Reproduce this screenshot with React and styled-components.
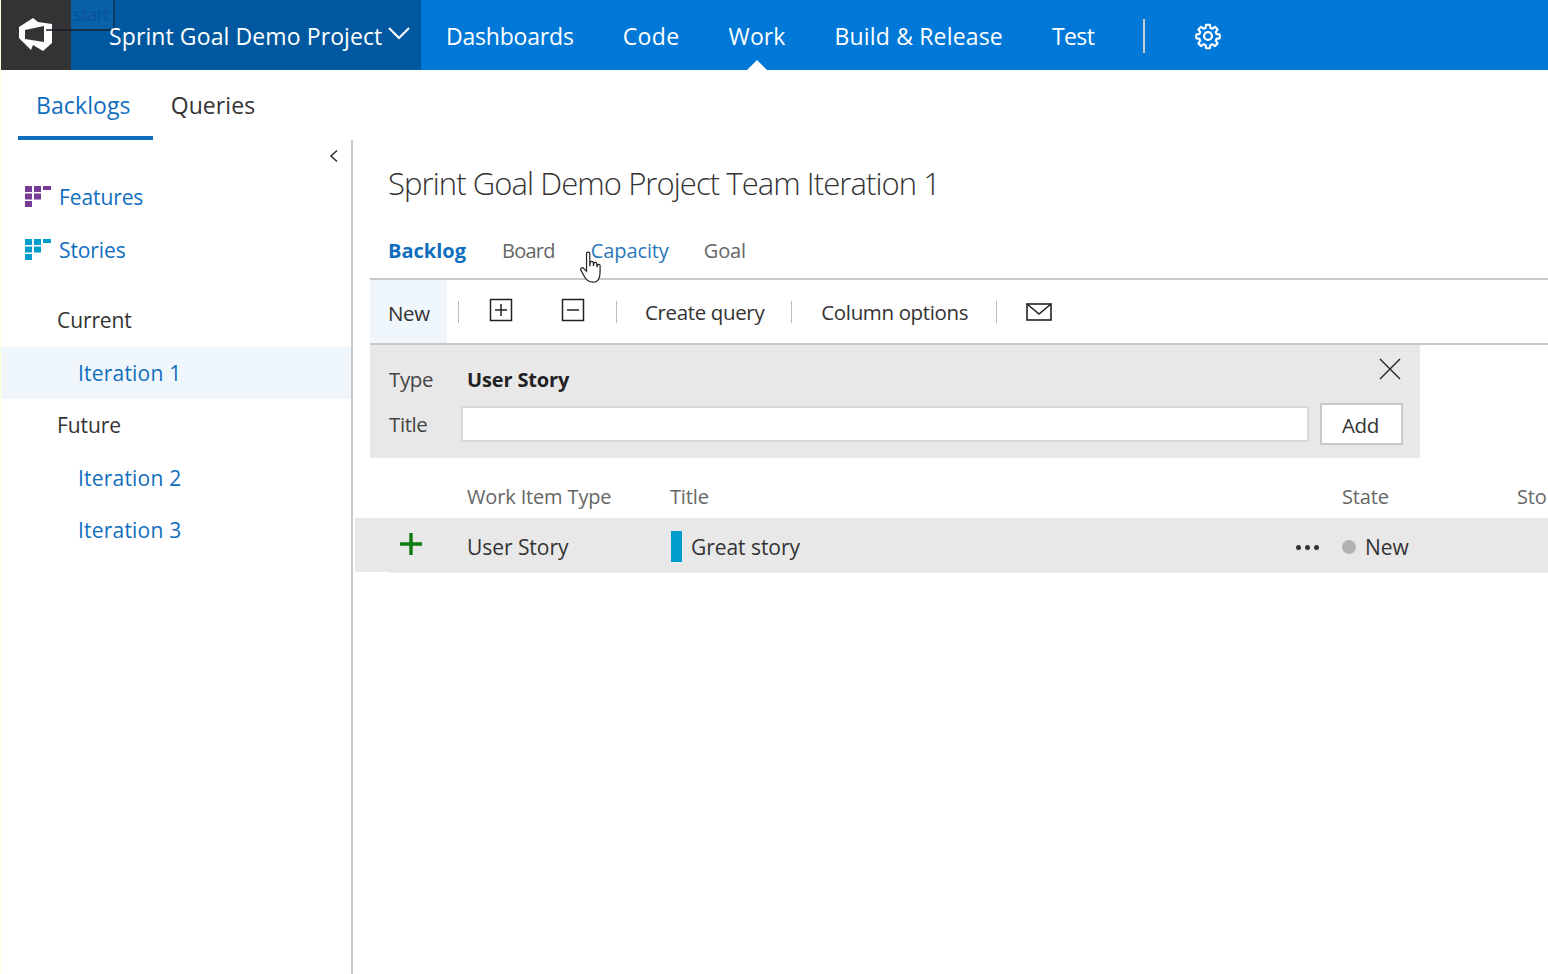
import React from "react";
import styled, { createGlobalStyle } from "styled-components";

const Global = createGlobalStyle`
  * { box-sizing: border-box; }
  html, body { margin: 0; padding: 0; background: #fff; }
  body {
    font-family: "Open Sans", "Noto Sans", "Liberation Sans", sans-serif;
    color: #333;
    overflow: hidden;
  }
`;

const LogoIcon = () => (
  <svg width="34" height="34" viewBox="0 0 34 34">
    <path
      fill="#fff"
      fillRule="evenodd"
      d="M14 0 L19 4 L33 6 L33 25 L24 33 L14 27 L12 32 L5 25 L0 20 L0 9 Z M6 12 L25 8 L25 24 L6 21 Z"
    />
  </svg>
);

const GearIcon = () => (
  <svg width="28" height="28" viewBox="0 0 24 24" fill="none" stroke="#fff" strokeWidth="1.9" strokeLinejoin="round">
    <path d="M10.3 2.2h3.4l.5 2.9 1.7.7 2.4-1.7 2.4 2.4-1.7 2.4.7 1.7 2.9.5v3.4l-2.9.5-.7 1.7 1.7 2.4-2.4 2.4-2.4-1.7-1.7.7-.5 2.9h-3.4l-.5-2.9-1.7-.7-2.4 1.7-2.4-2.4 1.7-2.4-.7-1.7-2.9-.5v-3.4l2.9-.5.7-1.7-1.7-2.4 2.4-2.4 2.4 1.7 1.7-.7z" transform="translate(12 12) scale(.95) translate(-12 -12.4)" />
    <circle cx="12" cy="12" r="3.4" />
  </svg>
);

const BacklogIcon = ({ color }) => (
  <svg width="26" height="21" viewBox="0 0 26 21" fill={color}>
    <rect x="0" y="0" width="7" height="6" />
    <rect x="9" y="0" width="7" height="6" />
    <rect x="18" y="0" width="8" height="4" />
    <rect x="0" y="7.5" width="7" height="6" />
    <rect x="9" y="7.5" width="7" height="6" />
    <rect x="0" y="15" width="7" height="6" />
  </svg>
);

const BoxIcon = ({ plus }) => (
  <svg width="24" height="24" viewBox="0 0 24 24" fill="none" stroke="#222" strokeWidth="1.5">
    <rect x="1.5" y="1.5" width="21" height="21" />
    <path d={plus ? "M12 6v12M6 12h12" : "M6 12h12"} />
  </svg>
);

const MailIcon = () => (
  <svg width="26" height="18" viewBox="0 0 26 18" fill="none" stroke="#222" strokeWidth="1.6">
    <rect x="1" y="1" width="24" height="16" />
    <path d="M1 1l12 10L25 1" />
  </svg>
);

const HandCursor = () => (
  <svg width="26" height="35" viewBox="0 0 22 32" fill="#fff" stroke="#222" strokeWidth="1.1">
    <path d="M6 2.5c0-2 3-2 3 0V14l.4-3.5c.3-1.5 2.8-1.4 2.8.3l.1 3 .4-2.4c.3-1.4 2.600-1.200 2.700.4l.1 3 .5-1.800c.4-1.200 2.400-.9 2.400.6 0 3.500.2 7.500-.6 10.200-.8 3-3 4.700-6 4.700-3.600 0-5.500-1-7.500-4.700L.8 17.500c-.7-1.500 1-2.900 2.300-1.700L6 18.500z" />
  </svg>
);

const Page = styled.div`
  width: 1548px;
  height: 974px;
  display: flex;
  flex-direction: column;
  border-left: 1px solid #ffffd8;
  position: relative;
  overflow: hidden;
`;

const TopBar = styled.header`
  height: 70px;
  flex: none;
  display: flex;
  align-items: stretch;
  background: #0078d7;
  color: #fff;
`;

const LogoBox = styled.div`
  width: 70px;
  background: #333;
  display: flex;
  align-items: center;
  justify-content: center;
`;

const ProjectBox = styled.div`
  width: 350px;
  background: #0059a0;
  display: flex;
  align-items: center;
  padding-left: 38px;
  font-size: 23px;
  letter-spacing: 0.1px;
  gap: 5px;
`;

const ProjectName = styled.span`
  position: relative;
  z-index: 2;
  margin-top: 2px;
`;

const Chevron = styled.svg`
  margin-top: -2px;
`;

const StartGhost = styled.div`
  position: absolute;
  left: 70px;
  top: 0;
  width: 44px;
  height: 31px;
  background: #0862a8;
  border-right: 2px solid #0d3d66;
  color: #0a5299;
  font-size: 19px;
  letter-spacing: -1px;
  line-height: 29px;
  padding-left: 2px;

  &::after {
    content: "";
    position: absolute;
    left: -25px;
    right: -2px;
    bottom: 0;
    height: 2px;
    background: rgba(20, 30, 40, 0.75);
  }
`;

const NavList = styled.nav`
  display: flex;
  align-items: center;
  padding-left: 25px;
`;

const NavItem = styled.div`
  font-size: 23px;
  letter-spacing: ${(p) => p.$spacing}px;
  margin-right: 49px;
  position: relative;
  height: 70px;
  line-height: 72px;

  ${(p) =>
    p.$active &&
    `
    &::after {
      content: "";
      position: absolute;
      left: 50%;
      bottom: 0;
      margin-left: -10px;
      border-left: 10px solid transparent;
      border-right: 10px solid transparent;
      border-bottom: 10px solid #fff;
    }
  `}
`;

const NavDivider = styled.div`
  width: 2px;
  height: 34px;
  background: #ccc;
  margin-right: 49px;
  margin-top: 2px;
`;

const GearWrap = styled.div`
  display: flex;
  margin-top: 2px;
`;

const HubBar = styled.div`
  height: 70px;
  flex: none;
  display: flex;
  padding-left: 17px;
`;

const HubTab = styled.div`
  height: 70px;
  padding: 0 22px 0 18px;
  line-height: 70px;
  font-size: 23px;
  letter-spacing: 0.1px;
  color: ${(p) => (p.$active ? "#106ebe" : "#333")};
  border-bottom: ${(p) => (p.$active ? "4px solid #106ebe" : "none")};
`;

const Body = styled.div`
  flex: 1;
  display: flex;
  min-height: 0;
`;

const Sidebar = styled.aside`
  width: 352px;
  flex: none;
  border-right: 2px solid #c8c8c8;
  padding-top: 4px;
`;

const CollapseRow = styled.div`
  height: 24px;
  display: flex;
  justify-content: flex-end;
  align-items: center;
  padding-right: 11px;
`;

const BacklogLink = styled.div`
  height: 53px;
  display: flex;
  align-items: center;
  gap: 8px;
  padding-left: 24px;
  font-size: 21px;
  letter-spacing: -0.1px;
  color: #106ebe;
`;

const FirstLinks = styled.div`
  padding-top: 2px;
  padding-bottom: 18px;
`;

const GroupLabel = styled.div`
  height: 53px;
  line-height: 53px;
  padding-left: 56px;
  font-size: 21px;
  letter-spacing: -0.1px;
`;

const IterationLink = styled.div`
  height: 52px;
  line-height: 52px;
  padding-left: 77px;
  font-size: 21px;
  letter-spacing: 0.2px;
  color: #106ebe;
  background: ${(p) => (p.$selected ? "#eff6fc" : "transparent")};
`;

const Main = styled.main`
  flex: 1;
  min-width: 0;
  padding-left: 2px;
`;

const Title = styled.h1`
  margin: 0;
  height: 68px;
  padding: 20px 0 0 33px;
  font-size: 31px;
  line-height: 46px;
  font-weight: 300;
  letter-spacing: -0.92px;
  color: #333;
`;

const PivotRow = styled.div`
  height: 70px;
  padding: 22px 0 0 33px;
  display: flex;
  gap: 36px;
`;

const PivotTab = styled.div`
  font-size: 20px;
  line-height: 42px;
  letter-spacing: ${(p) => p.$spacing}px;
  margin-right: ${(p) => p.$right || 0}px;
  font-weight: ${(p) => (p.$active ? 700 : 400)};
  color: ${(p) => (p.$active ? "#106ebe" : p.$blue ? "#2b78b8" : "#666")};
`;

const Toolbar = styled.div`
  margin-left: 15px;
  height: 67px;
  display: flex;
  align-items: center;
  border-top: 2px solid #c8c8c8;
  border-bottom: 2px solid #c8c8c8;
  font-size: 20.5px;
  letter-spacing: -0.36px;
  color: #333;
`;

const NewButton = styled.div`
  width: 77px;
  height: 100%;
  background: #eff6fc;
  line-height: 66px;
  padding-left: 18px;
`;

const ToolDivider = styled.div`
  width: 1px;
  height: 22px;
  background: #bbb;
  margin-left: ${(p) => p.$left}px;
  margin-right: ${(p) => p.$right}px;
`;

const ToolIcon = styled.div`
  display: flex;
  margin-top: ${(p) => p.$top ?? -4}px;
  margin-right: ${(p) => p.$right || 0}px;
`;

const ToolText = styled.div`
  line-height: 1;
  white-space: nowrap;
  margin-top: 2px;
`;

const QuickForm = styled.div`
  margin-left: 15px;
  width: 1050px;
  height: 113px;
  background: #e8e8e8;
  display: grid;
  grid-template-columns: 80px 848px 83px;
  grid-template-rows: 58px 40px;
  column-gap: 11px;
  position: relative;
`;

const FormLabel = styled.div`
  padding-left: 19px;
  font-size: 20.5px;
  letter-spacing: -0.4px;
  display: flex;
  align-items: ${(p) => (p.$top ? "flex-end" : "center")};
  padding-bottom: ${(p) => (p.$top ? "10px" : "0")};
  padding-top: ${(p) => (p.$top ? "0" : "1px")};
  color: #444;
  white-space: nowrap;
`;

const TypeValue = styled.div`
  grid-column: 2 / 4;
  font-size: 20px;
  font-weight: 700;
  letter-spacing: -0.15px;
  color: #222;
  display: flex;
  align-items: flex-end;
  margin-left: 6px;
  padding-bottom: 10px;
`;

const TitleInput = styled.input`
  height: 36px;
  margin: 3px 0 0 0;
  border: 2px solid #d9d9d9;
  background: #fff;
`;

const AddButton = styled.button`
  height: 42px;
  background: #fff;
  border: 2px solid #c8c8c8;
  font: inherit;
  font-size: 20.5px;
  letter-spacing: -0.3px;
  color: #333;
  padding: 2px 2px 0 0;
`;

const CloseButton = styled.div`
  position: absolute;
  right: 19px;
  top: 13px;
  display: flex;
`;

const HeadRow = styled.div`
  margin-left: 112px;
  height: 60px;
  display: grid;
  grid-template-columns: 203px 672px 175px 1fr;
  align-items: center;
  padding-top: 16px;
  font-size: 20px;
  letter-spacing: -0.15px;
  color: #666;
  white-space: nowrap;
  overflow: hidden;
`;

const ItemRow = styled.div`
  height: 54px;
  background: #e8e8e8;
  display: grid;
  grid-template-columns: 112px 203px 625px 47px 1fr;
  align-items: center;
  font-size: 21px;
  letter-spacing: -0.05px;
  line-height: 58px;
  color: #333;
  position: relative;

  &::after {
    content: "";
    position: absolute;
    left: 35px;
    right: 0;
    bottom: -1px;
    height: 1px;
    background: #e8e8e8;
  }
`;

const PlusCell = styled.div`
  display: flex;
  justify-content: flex-end;
  padding-right: 44px;
  margin-top: -6px;
`;

const TitleCell = styled.div`
  display: flex;
  align-items: center;
  gap: 9px;
`;

const ColorBar = styled.span`
  width: 11px;
  height: 31px;
  background: #009ccc;
  margin-left: 1px;
  margin-top: -1px;
`;

const Dots = styled.div`
  display: flex;
  gap: 4px;
  margin-left: 1px;
`;

const Dot = styled.span`
  width: 5px;
  height: 5px;
  border-radius: 50%;
  background: #333;
`;

const StateCell = styled.div`
  display: flex;
  align-items: center;
  gap: 9px;
`;

const StateDot = styled.span`
  width: 14px;
  height: 14px;
  border-radius: 50%;
  background: #b2b2b2;
`;

const CursorOverlay = styled.div`
  position: absolute;
  left: 578px;
  top: 251px;
  display: flex;
`;

export default function App() {
  return (
    <Page>
      <Global />
      <TopBar>
        <LogoBox>
          <LogoIcon />
        </LogoBox>
        <ProjectBox>
          <ProjectName>Sprint Goal Demo Project</ProjectName>
          <Chevron width="24" height="24" viewBox="0 0 24 24" fill="none" stroke="#fff" strokeWidth="2">
            <path d="M2 6l10 10L22 6" />
          </Chevron>
        </ProjectBox>
        <NavList>
          <NavItem $spacing={-0.2}>Dashboards</NavItem>
          <NavItem $spacing={0.4}>Code</NavItem>
          <NavItem $active $spacing={0.1}>Work</NavItem>
          <NavItem $spacing={0.17}>Build &amp; Release</NavItem>
          <NavItem $spacing={-0.6}>Test</NavItem>
          <NavDivider />
          <GearWrap>
            <GearIcon />
          </GearWrap>
        </NavList>
      </TopBar>
      <StartGhost>start</StartGhost>

      <HubBar>
        <HubTab $active>Backlogs</HubTab>
        <HubTab>Queries</HubTab>
      </HubBar>

      <Body>
        <Sidebar>
          <CollapseRow>
            <svg width="12" height="14" viewBox="0 0 12 14" fill="none" stroke="#333" strokeWidth="1.6">
              <path d="M9 1.500L3 7l6 5.500" />
            </svg>
          </CollapseRow>
          <FirstLinks>
            <BacklogLink>
              <BacklogIcon color="#773b93" />
              Features
            </BacklogLink>
            <BacklogLink>
              <BacklogIcon color="#009ccc" />
              Stories
            </BacklogLink>
          </FirstLinks>
          <GroupLabel>Current</GroupLabel>
          <IterationLink $selected>Iteration 1</IterationLink>
          <GroupLabel>Future</GroupLabel>
          <IterationLink>Iteration 2</IterationLink>
          <IterationLink>Iteration 3</IterationLink>
        </Sidebar>

        <Main>
          <Title>Sprint Goal Demo Project Team Iteration 1</Title>
          <PivotRow>
            <PivotTab $active $spacing={0}>Backlog</PivotTab>
            <PivotTab $spacing={-0.75}>Board</PivotTab>
            <PivotTab $blue $spacing={-0.1} $right={-1}>Capacity</PivotTab>
            <PivotTab $spacing={-0.15}>Goal</PivotTab>
          </PivotRow>
          <Toolbar>
            <NewButton>New</NewButton>
            <ToolDivider $left={11} $right={30} />
            <ToolIcon $right={48}>
              <BoxIcon plus />
            </ToolIcon>
            <ToolIcon>
              <BoxIcon />
            </ToolIcon>
            <ToolDivider $left={31} $right={28} />
            <ToolText>Create query</ToolText>
            <ToolDivider $left={27} $right={29} />
            <ToolText>Column options</ToolText>
            <ToolDivider $left={28} $right={29} />
            <ToolIcon $top={0}>
              <MailIcon />
            </ToolIcon>
          </Toolbar>
          <QuickForm>
            <FormLabel $top>Type</FormLabel>
            <TypeValue>User Story</TypeValue>
            <FormLabel>Title</FormLabel>
            <TitleInput />
            <AddButton>Add</AddButton>
            <CloseButton>
              <svg width="22" height="22" viewBox="0 0 22 22" fill="none" stroke="#222" strokeWidth="1.4">
                <path d="M1 1l20 20M21 1L1 21" />
              </svg>
            </CloseButton>
          </QuickForm>
          <HeadRow>
            <div>Work Item Type</div>
            <div>Title</div>
            <div>State</div>
            <div>Sto</div>
          </HeadRow>
          <ItemRow>
            <PlusCell>
              <svg width="24" height="24" viewBox="0 0 24 24" fill="none" stroke="#107c10" strokeWidth="3.4">
                <path d="M12 1v22M1 12h22" />
              </svg>
            </PlusCell>
            <div>User Story</div>
            <TitleCell>
              <ColorBar />
              Great story
            </TitleCell>
            <Dots>
              <Dot />
              <Dot />
              <Dot />
            </Dots>
            <StateCell>
              <StateDot />
              New
            </StateCell>
          </ItemRow>
        </Main>
      </Body>

      <CursorOverlay>
        <HandCursor />
      </CursorOverlay>
    </Page>
  );
}
